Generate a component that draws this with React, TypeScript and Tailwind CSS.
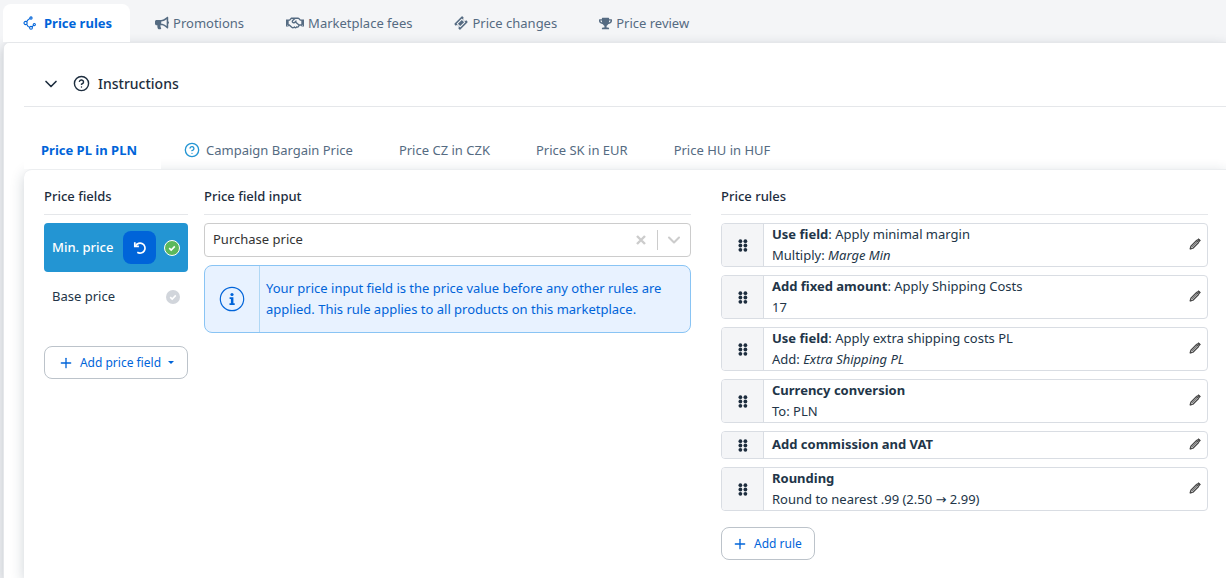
import { useState } from "react";
import { FaBullhorn, FaRegHandshake, FaTrophy } from "react-icons/fa";
import { ChevronDown, CircleHelp, Plus } from "lucide-react";

function NodesIcon() {
    return (
        <svg width="14" height="14" viewBox="0 0 14 14" fill="none" stroke="currentColor" strokeWidth="1.1" aria-hidden="true">
            <circle cx="2.6" cy="7" r="1.6" />
            <circle cx="8" cy="2" r="1.1" />
            <circle cx="8" cy="11.8" r="1.4" />
            <circle cx="11.3" cy="8.6" r="1.1" />
            <path d="M3.600 5.700 5.200 3.600 7 2.500M3.600 8.300 5 10.400 6.700 11.400M9 10.800l1.500-1.400" />
        </svg>
    );
}

function TicketIcon() {
    return (
        <svg width="14" height="14" viewBox="0 0 14 14" fill="currentColor" fillRule="evenodd" aria-hidden="true">
            <path d="M8.600 .6l1.100 1.100a1.600 1.600 0 0 0 2.600 2.600l1.100 1.100q.5.500 0 1l-7 7q-.5.500-1 0l-1.100-1.100a1.600 1.600 0 0 0-2.600-2.600L.6 8.600q-.5-.5 0-1l7-7q.5-.5 1 0zM7.500 2.800 2.800 7.500q-.3.300 0 .6l3.100 3.100q.3.300.6 0l4.700-4.700q.3-.3 0-.6L8.100 2.800q-.3-.3-.6 0zM7.800 3.900l2.300 2.300-3.900 3.900-2.300-2.300z" />
        </svg>
    );
}

function PencilIcon() {
    return (
        <svg width="12" height="12" viewBox="0 0 12 12" fill="none" stroke="currentColor" aria-hidden="true">
            <path d="M1.300 10.800l.6-2.600 5.700-5.700 2 2-5.700 5.700z" strokeWidth="1.300" strokeLinejoin="round" />
            <path d="M3.200 9l5.200-5.200" strokeWidth=".9" />
            <path d="M8.300 1.800l.8-.8q.5-.4 1 0l1 1q.4.500 0 1l-.8.800z" fill="currentColor" strokeWidth=".8" />
            <path d="M1 11.100l.4-1.800 1.400 1.400z" fill="currentColor" strokeWidth=".4" />
        </svg>
    );
}

function GripIcon() {
    return (
        <svg width="10" height="13" viewBox="0 0 10 13" fill="currentColor" aria-hidden="true">
            {[2.2, 6.5, 10.8].map((y) => (
                <g key={y}>
                    <circle cx="2.4" cy={y} r="1.9" />
                    <circle cx="7.4" cy={y} r="1.9" />
                </g>
            ))}
        </svg>
    );
}

function CheckIcon() {
    return (
        <svg width="10" height="10" viewBox="0 0 10 10" fill="none" stroke="white" strokeWidth="1.6" aria-hidden="true">
            <path d="M2.200 5.200l2 1.900 3.600-3.700" />
        </svg>
    );
}

function UndoIcon() {
    return (
        <svg width="14" height="14" viewBox="0 0 14 14" fill="none" stroke="currentColor" strokeWidth="1.7" aria-hidden="true">
            <path d="M2.600 4.800A5 5 0 1 1 4.300 11.300" />
            <path d="M1.800 1.200v4.100h4.100" />
        </svg>
    );
}

const mainTabs = [
    { label: "Price rules", icon: <NodesIcon /> },
    { label: "Promotions", icon: <FaBullhorn size={14} /> },
    { label: "Marketplace fees", icon: <FaRegHandshake size={18} /> },
    { label: "Price changes", icon: <TicketIcon /> },
    { label: "Price review", icon: <FaTrophy size={13} /> },
];

const priceTabs = ["Price PL in PLN", "Campaign Bargain Price", "Price CZ in CZK", "Price SK in EUR", "Price HU in HUF"];

const rules = [
    { name: "Use field", note: "Apply minimal margin", detail: "Multiply: ", field: "Marge Min" },
    { name: "Add fixed amount", note: "Apply Shipping Costs", detail: "17" },
    { name: "Use field", note: "Apply extra shipping costs PL", detail: "Add: ", field: "Extra Shipping PL" },
    { name: "Currency conversion", detail: "To: PLN" },
    { name: "Add commission and VAT" },
    { name: "Rounding", detail: "Round to nearest .99 (2.50 → 2.99)" },
];

export default function App() {
    const [tab, setTab] = useState(0);
    const [priceTab, setPriceTab] = useState(0);
    const [input, setInput] = useState("Purchase price");

    return (
        <div className="min-h-screen flex flex-col overflow-x-hidden bg-[#f4f5f7] pl-[3px] font-['Noto_Sans','DejaVu_Sans',sans-serif] text-[13px] leading-[21px] text-[#223548]">
            <nav className="flex pt-1">
                {mainTabs.map((t, i) => (
                    <button
                        key={t.label}
                        onClick={() => setTab(i)}
                        className={`flex items-center h-[38px] whitespace-nowrap ${i === tab
                            ? "relative z-10 gap-[7px] pl-5 pr-[18px] mr-1 rounded-t-lg bg-white font-bold text-[#0064d9]"
                            : "gap-1 px-[21px] text-[#556b82]"}`}
                    >
                        {t.icon}
                        {t.label}
                    </button>
                ))}
            </nav>

            <main className="flex-1 flex flex-col rounded-tl-md border-t border-l border-[#e5e7ea] bg-white pl-5 shadow-[0_4px_12px_rgba(34,53,72,0.25)]">
                <button className="flex items-center h-16 pt-[18px] pl-[17px] border-b border-[#e5e7ea] text-sm font-medium text-[#1d2d3e]">
                    <ChevronDown size={20} strokeWidth={2} className="mr-3" />
                    <CircleHelp size={17} className="mr-2" />
                    Instructions
                </button>

                <div className="flex mt-6">
                    {priceTabs.map((label, i) => (
                        <button
                            key={label}
                            onClick={() => setPriceTab(i)}
                            className={`flex items-center gap-[6px] h-[38px] whitespace-nowrap ${i === priceTab ? "relative z-10 bg-white pl-[17px] pr-6 font-bold text-[#0064d9]" : "px-[23px] text-[#556b82]"}`}
                        >
                            {i === 1 && <CircleHelp size={16} className="text-[#2395d3]" />}
                            {label}
                        </button>
                    ))}
                </div>

                <section className="flex-1 flex items-start rounded-tl-lg border-t border-[#eceef0] bg-white pt-4 pl-5 pr-[18px] pb-4 shadow-[0_4px_14px_rgba(34,53,72,0.22)]">
                    <div className="w-36 shrink-0 mr-4">
                        <h2 className="h-[29px] mb-2 border-b border-[#e5e7ea] font-medium text-[#1d2d3e]">Price fields</h2>
                        <div className="flex items-center h-[49px] px-2 rounded bg-[#2395d3] text-white">
                            <span className="font-medium">Min. price</span>
                            <button aria-label="Reset" className="ml-auto mr-2 flex size-[33px] items-center justify-center rounded-lg bg-[#0064d9]">
                                <UndoIcon />
                            </button>
                            <span className="flex size-4 items-center justify-center rounded-full border border-white bg-[#5cb85c]">
                                <CheckIcon />
                            </span>
                        </div>
                        <div className="flex items-center justify-between h-[49px] px-2">
                            <span>Base price</span>
                            <span className="flex size-[14px] items-center justify-center rounded-full bg-[#d1d5db]">
                                <CheckIcon />
                            </span>
                        </div>
                        <button className="mt-[25px] flex w-full h-[33px] items-center justify-center rounded-lg border border-[#bcc3ca] whitespace-nowrap text-xs text-[#0064d9]">
                            <Plus size={16} className="mr-[6px]" />
                            Add price field
                            <span className="ml-[7px] border-x-[3px] border-t-[3px] border-x-transparent border-t-current" />
                        </button>
                    </div>

                    <div className="flex-1 min-w-0 mr-[30px]">
                        <h2 className="h-[29px] mb-2 border-b border-[#e5e7ea] font-medium text-[#1d2d3e]">
                            <label htmlFor="price-input">Price field input</label>
                        </h2>
                        <div className="flex items-center h-[34px] mb-2 rounded border border-[#ccc] text-[#ccc]">
                            <input
                                id="price-input"
                                value={input}
                                onChange={(e) => setInput(e.target.value)}
                                className="flex-1 min-w-0 px-2 pb-[2px] text-[#333] outline-none"
                            />
                            <button aria-label="Clear" onClick={() => setInput("")} className="mr-[11px]">
                                <svg width="10" height="10" viewBox="0 0 10 10" stroke="currentColor" strokeWidth="2.4" aria-hidden="true">
                                    <path d="M1 1l8 8M9 1l-8 8" />
                                </svg>
                            </button>
                            <span className="h-5 w-px bg-[#ccc]" />
                            <button aria-label="Open list" className="px-[6px]">
                                <ChevronDown size={20} strokeWidth={2.5} />
                            </button>
                        </div>
                        <div className="flex rounded-lg border border-[#89c4f4] bg-[#e8f2ff] text-[#0064d9]">
                            <div className="flex w-[55px] shrink-0 items-center justify-center border-r border-[#b0d8f5]">
                                <svg width="26" height="26" viewBox="0 0 26 26" fill="currentColor" aria-hidden="true">
                                    <circle cx="13" cy="13" r="11.7" fill="none" stroke="currentColor" strokeWidth="1.2" />
                                    <circle cx="13" cy="8.500" r="1.600" />
                                    <path d="M10.600 11.300h3.800v6h1.300v1.700h-5.200v-1.700h1.400v-4.300h-1.300z" />
                                </svg>
                            </div>
                            <p className="py-3 pl-[6px] pr-4">
                                Your price input field is the price value before any other rules are applied. This rule applies to all products on this marketplace.
                            </p>
                        </div>
                    </div>

                    <div className="flex-1 min-w-0">
                        <h2 className="h-[29px] mb-2 border-b border-[#e5e7ea] font-medium text-[#1d2d3e]">Price rules</h2>
                        <ul className="flex flex-col gap-2">
                            {rules.map((rule, i) => (
                                <li key={i} className="flex rounded border border-[#d9dde3] overflow-hidden">
                                    <div className="flex w-[42px] shrink-0 items-center justify-center border-r border-[#d9dde3] bg-[#f4f5f7] text-[#1d2d3e]">
                                        <GripIcon />
                                    </div>
                                    <div className={`flex-1 min-w-0 px-2 ${rule.detail ? "" : "pt-[2px] pb-1"}`}>
                                        <p className="leading-5">
                                            <strong>{rule.name}</strong>
                                            {rule.note && `: ${rule.note}`}
                                        </p>
                                        {rule.detail && (
                                            <p className="leading-[22px]">
                                                {rule.detail}
                                                <em>{rule.field}</em>
                                            </p>
                                        )}
                                    </div>
                                    <button aria-label={`Edit ${rule.name}`} className="pr-[6px] pb-[2px] text-[#4a4a4a]">
                                        <PencilIcon />
                                    </button>
                                </li>
                            ))}
                        </ul>
                        <button className="mt-4 flex h-[33px] items-center rounded-lg border border-[#bcc3ca] pl-[10px] pr-3 text-xs text-[#0064d9]">
                            <Plus size={16} className="mr-[6px]" />
                            Add rule
                        </button>
                    </div>
                </section>
            </main>
        </div>
    );
}
